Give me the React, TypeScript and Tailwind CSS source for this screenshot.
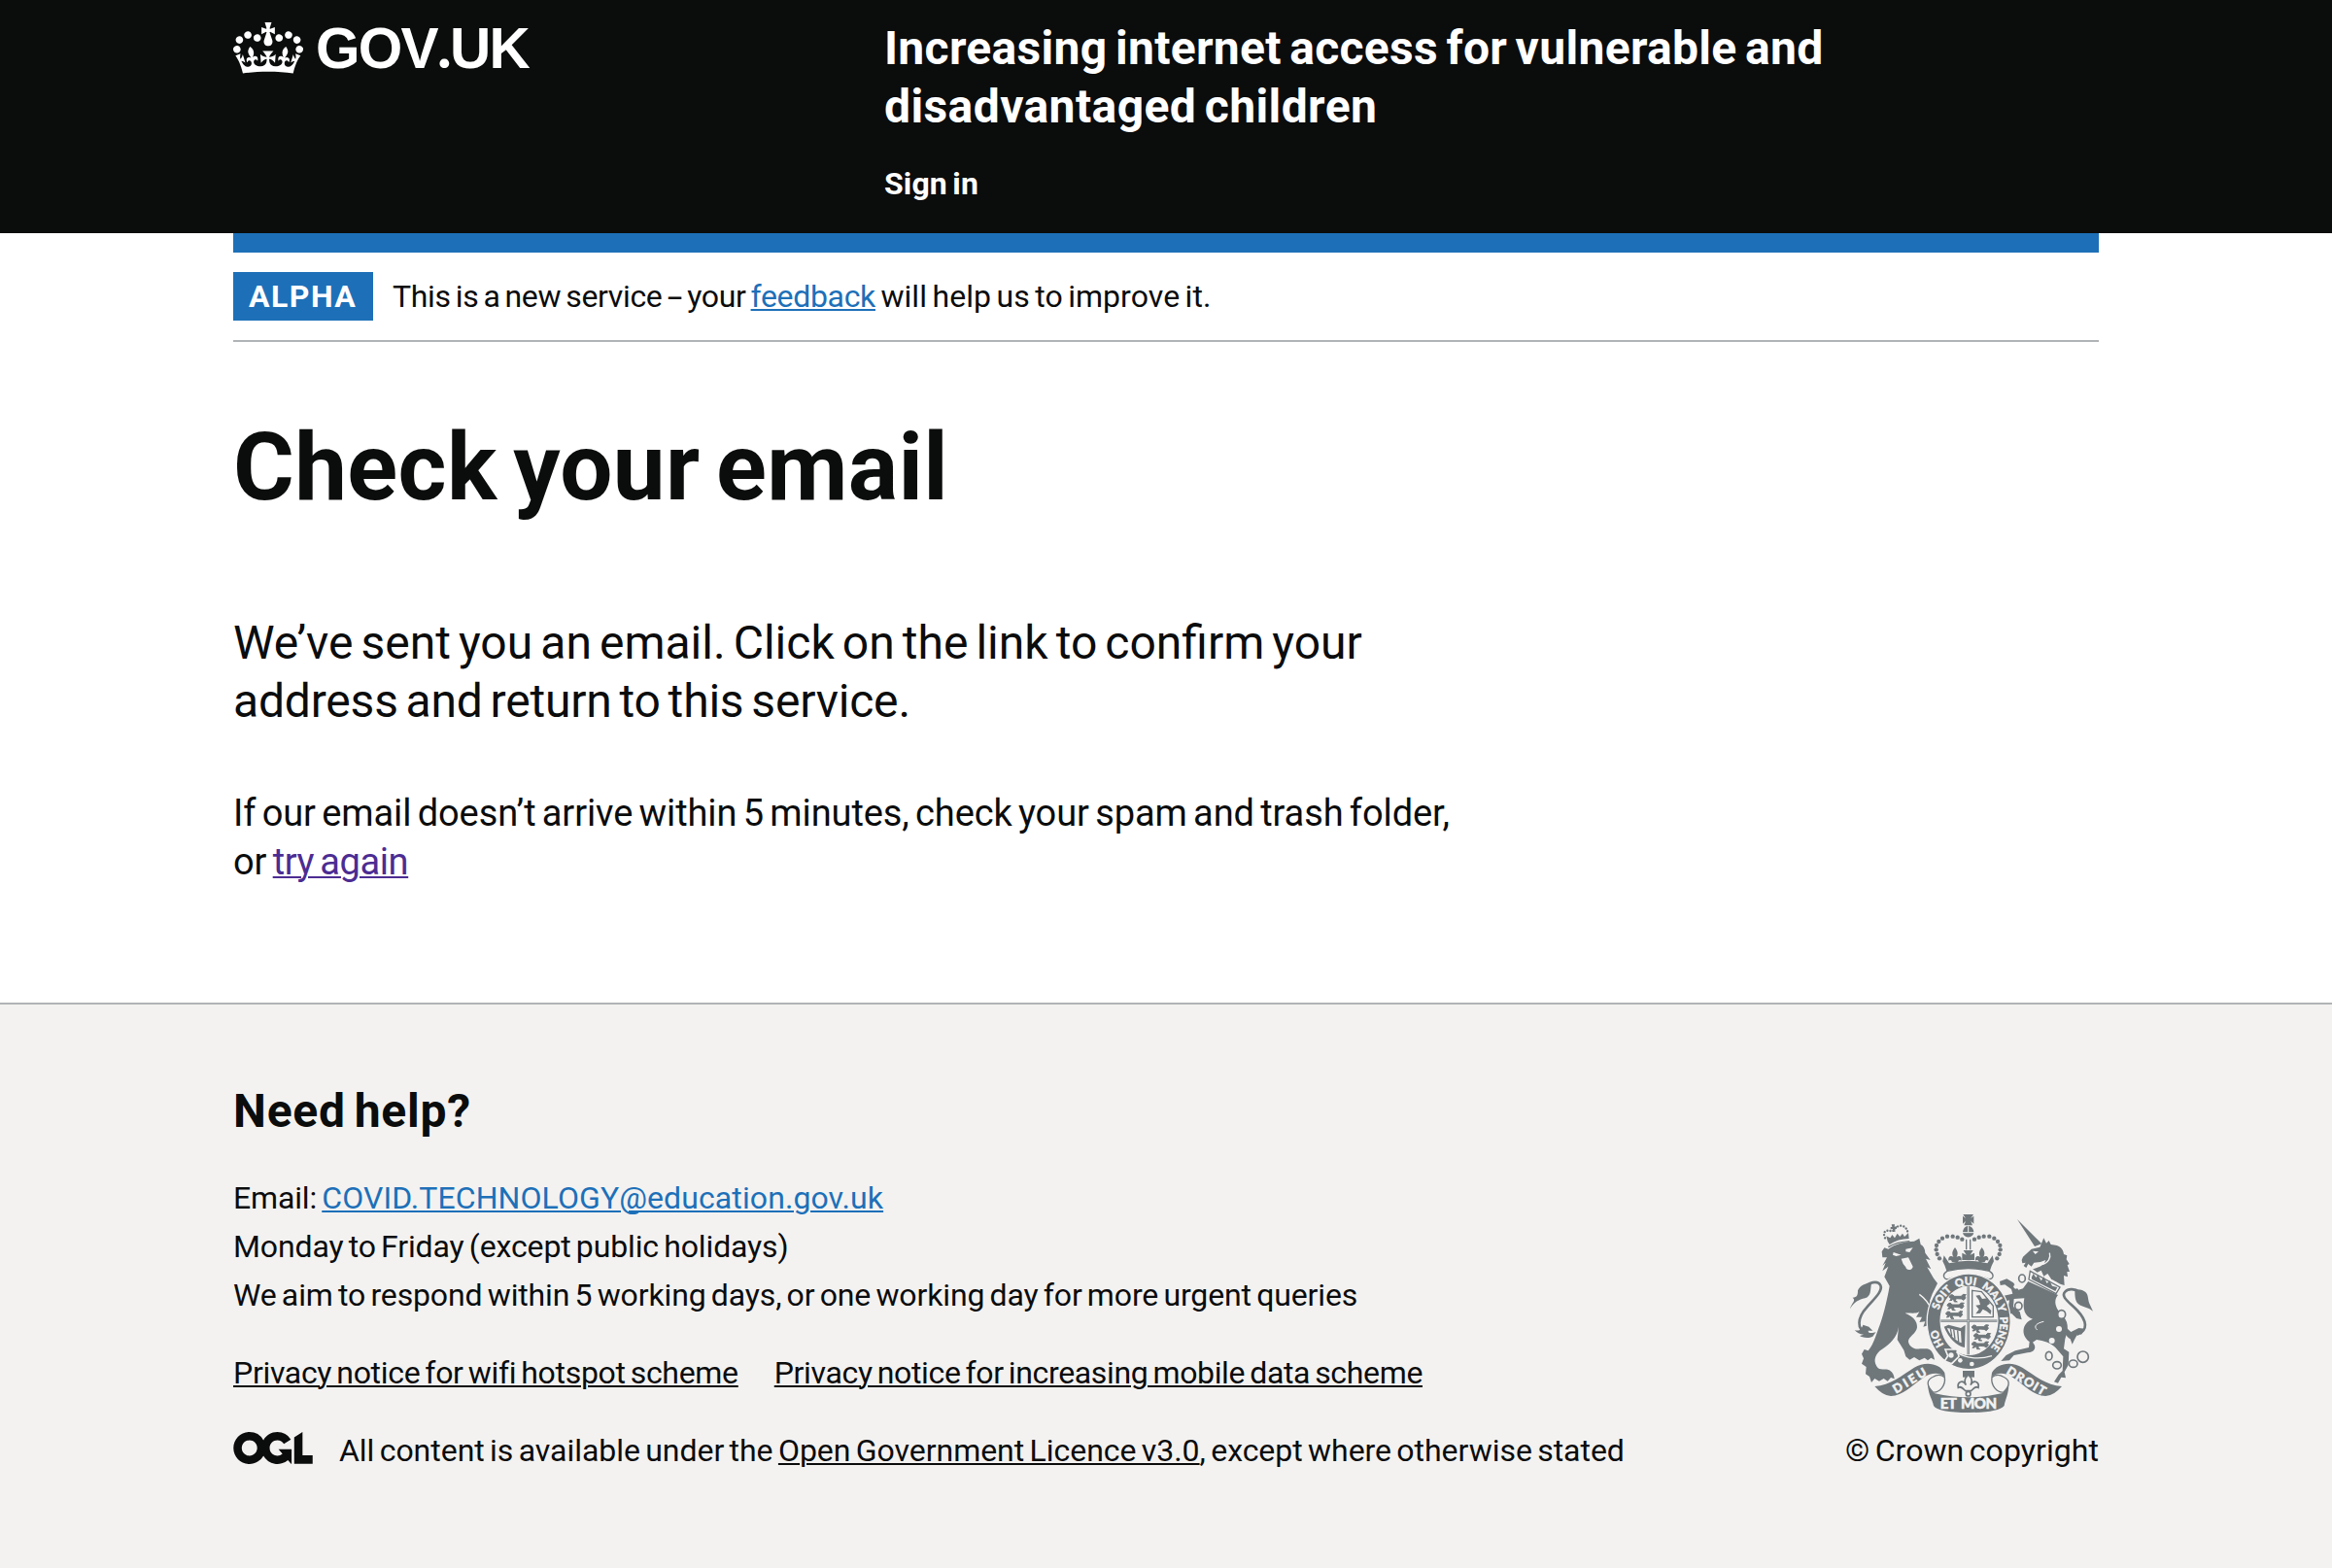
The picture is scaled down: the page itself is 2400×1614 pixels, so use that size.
const CROWN =
  'M25 30.2c3.5 1.5 7.7-.2 9.1-3.7 1.5-3.6-.2-7.8-3.9-9.2-3.6-1.4-7.6.3-9.1 3.9-1.4 3.5.3 7.5 3.9 9zM9 39.5c3.6 1.5 7.8-.2 9.2-3.7 1.5-3.6-.2-7.8-3.9-9.1-3.6-1.5-7.6.2-9.1 3.8-1.4 3.5.3 7.5 3.8 9zM4.4 57.2c3.5 1.5 7.7-.2 9.1-3.8 1.5-3.6-.2-7.7-3.9-9.1-3.5-1.5-7.6.3-9.1 3.8-1.4 3.5.3 7.6 3.9 9.1zm38.3-21.4c3.5 1.5 7.7-.2 9.1-3.8 1.5-3.6-.2-7.7-3.9-9.1-3.6-1.5-7.6.3-9.1 3.8-1.3 3.6.4 7.7 3.9 9.1zm64.4-5.6c-3.6 1.5-7.8-.2-9.1-3.7-1.5-3.6.2-7.8 3.8-9.2 3.6-1.4 7.7.3 9.2 3.9 1.3 3.5-.4 7.5-3.9 9zm15.9 9.3c-3.6 1.5-7.7-.2-9.1-3.7-1.5-3.6.2-7.8 3.7-9.1 3.6-1.5 7.7.2 9.2 3.8 1.5 3.5-.3 7.5-3.8 9zm4.7 17.7c-3.6 1.5-7.8-.2-9.2-3.8-1.5-3.6.2-7.7 3.9-9.1 3.6-1.5 7.7.3 9.2 3.8 1.3 3.5-.4 7.6-3.9 9.1zM89.3 35.8c-3.6 1.5-7.8-.2-9.2-3.8-1.4-3.6.2-7.7 3.9-9.1 3.6-1.5 7.7.3 9.2 3.8 1.4 3.6-.3 7.7-3.9 9.1zM69.7 17.7l8.9 4.7V9.3l-8.9 2.8c-.2-.3-.5-.6-.9-.9L72.4 0H59.6l3.5 11.2c-.3.3-.6.5-.9.9l-8.8-2.8v13.1l8.8-4.7c.3.3.6.7.9.9l-5 15.4v.1c-.2.8-.4 1.6-.4 2.4 0 4.1 3.1 7.5 7 8.1h.2c.3 0 .7.1 1 .1.4 0 .7 0 1-.1h.2c4-.6 7.1-4.1 7.1-8.1 0-.8-.1-1.7-.4-2.4V34l-5.1-15.4c.4-.2.7-.6 1-.9zM66 92.8c16.9 0 32.8 1.1 47.1 3.2 4-16.9 8.9-26.7 14-33.5l-9.6-3.4c1 4.9 1.1 7.2 0 10.2-1.5-1.4-3-4.3-4.2-8.7L108.6 76c2.8-2 5-3.2 7.5-3.3-4.4 9.4-10 11.9-13.6 11.2-4.3-.8-6.3-4.6-5.6-7.9 1-4.7 5.7-5.9 8-.5 4.3-8.7-3-11.4-7.6-8.8 7.1-7.2 7.9-13.5 2.1-21.1-8 6.1-8.1 12.3-4.5 20.8-4.7-5.4-12.1-2.5-9.5 6.2 3.4-5.2 7.9-2 7.2 3.1-.6 4.3-6.4 7.8-13.5 7.2-10.3-.9-10.9-8-11.2-13.8 2.5-.5 7.1 1.8 11 7.3L80.2 60c-4.1 4.4-8 5.3-12.3 5.4 1.4-4.4 8-11.6 8-11.6H55.5s6.4 7.2 7.9 11.6c-4.2-.1-8-1-12.3-5.4l1.4 16.4c3.9-5.5 8.5-7.7 10.9-7.3-.3 5.8-.9 12.8-11.1 13.8-7.2.6-12.9-2.9-13.5-7.2-.7-5 3.8-8.3 7.1-3.1 2.7-8.7-4.6-11.6-9.4-6.2 3.7-8.5 3.6-14.7-4.6-20.8-5.8 7.6-5 13.9 2.2 21.1-4.7-2.6-11.9.1-7.7 8.8 2.3-5.5 7.1-4.2 8.1.5.7 3.3-1.3 7.1-5.7 7.9-3.5.7-9-1.8-13.5-11.2 2.5.1 4.7 1.3 7.5 3.3l-4.7-15.4c-1.2 4.4-2.7 7.2-4.3 8.7-1.1-3-.9-5.3 0-10.2l-9.5 3.4c5 6.9 9.9 16.7 14 33.5 14.8-2.1 30.8-3.2 47.7-3.2z';

const OGL =
  'M421.5 142.8V.1l-50.7 32.3v161.1h112.4v-50.7zm-122.3-9.6A47.12 47.12 0 0 1 221 97.8c0-26 21.1-47.1 47.1-47.1 16.7 0 31.4 8.7 39.7 21.8l42.7-27.2A97.63 97.63 0 0 0 268.1 0c-36.5 0-68.3 20.1-85.1 49.7A98 98 0 0 0 97.8 0C43.9 0 0 43.9 0 97.8s43.9 97.8 97.8 97.8c36.5 0 68.3-20.1 85.1-49.7a97.76 97.76 0 0 0 149.6 25.4l19.4 22.2h3v-87.8h-80l24.3 27.5zM97.8 145c-26 0-47.1-21.1-47.1-47.1s21.1-47.1 47.1-47.1 47.1 21.1 47.1 47.1S123.8 145 97.8 145';

const INK = '#6f777b';
const BG = '#f3f2f1';

const LEFT_DOTS = [[388, 122], [374, 116], [359, 113], [342, 113], [327, 119], [316, 129], [309, 141], [308, 154], [311, 168], [318, 181]];

function SmallLion({ x, y }: { x: number; y: number }) {
  return (
    <path
      transform={`translate(${x} ${y})`}
      d="M0 6l6-5 6 1 3 4 22 0 6-6 9 1-4 4 3 6-6 7-7-4-16-1-3 6 6 4h-9l-3-9-4 4-7 1 5-6-6-3z"
      fill={INK}
      stroke={INK}
      strokeWidth="3"
    />
  );
}

function Fleur({ x, y, s }: { x: number; y: number; s: number }) {
  return (
    <path
      transform={`translate(${x} ${y}) scale(${s})`}
      d="M0-20C8-10 9-3 4 6c7-6 16-1 13 10-3-4-8-3-9 3H-8C-9 13-14 12-17 16-20 5-11 0-4 6-9-3-8-10 0-20z"
      fill={INK}
    />
  );
}

function Crest() {
  return (
    <svg className="block h-[204px] w-[250px]" viewBox="42 45 750 612" fill={INK}>
      <defs>
        <path id="garter" d="M336 453A97 114 0 1 1 480 453" />
      </defs>

      {/* Lion's tail */}
      <path d="M94 408C60 404 66 362 92 334C116 306 144 282 136 264C128 248 98 254 84 274" fill="none" stroke={INK} strokeWidth="8" />
      <path d="M42 337C46 318 62 312 50 302C64 302 66 294 66 280C74 262 92 256 108 258C104 280 108 298 88 304C70 308 54 316 42 337z" />
      <path d="M56 402C70 408 78 398 82 386L100 392L112 404L98 404C98 414 112 412 122 408L112 422C98 430 76 424 72 420L84 416C72 416 62 410 56 402z" />

      {/* Lion */}
      <path d="M140 160L148 148L160 152C180 136 214 128 240 128L256 119L260 138C268 142 274 152 274 164L290 186L276 182L292 214L280 208L300 242L312 258L296 290L288 312L300 330L320 384L308 400L298 390L290 402L282 388L268 392L274 376L256 378L264 362L246 362L256 346C240 354 226 348 212 350C236 360 250 374 249 394C247 414 222 422 222 438C224 452 240 464 258 460L280 460C294 462 300 476 303 494L292 488L282 496L272 488L256 496L240 486L226 494L214 484L208 464L188 432L192 392C188 424 164 446 140 462C122 474 112 494 124 514C132 528 144 522 158 524C172 528 178 540 179 553L168 549L158 560L146 552L132 560L118 552L108 564L102 546L90 538L92 516L78 506L84 490L78 476L86 462L98 466C116 444 124 412 134 386C148 346 158 300 164 266L148 238L160 206L142 220L152 194L142 204L156 178L142 178z" />
      <path d="M176 162L200 170L184 174L174 170zM214 152L236 148L226 162L214 160z" fill={BG} />
      <path d="M200 182L222 178L236 206C236 216 216 222 214 208L206 198z" fill={BG} />
      <path d="M256 292C276 306 288 324 296 344" fill="none" stroke={BG} strokeWidth="4" />
      <path d="M158 128L154 112L166 118L172 108L180 118L188 104L196 114L204 104L210 114L222 102L224 120Q190 120 164 138z" />
      <path d="M160 146Q186 130 226 128" fill="none" stroke={INK} strokeWidth="4" />
      <path d="M150 118C142 100 150 90 174 98C184 76 214 72 220 100" fill="none" stroke={INK} strokeWidth="7" strokeLinecap="round" strokeDasharray="0.1 9.5" />
      <path d="M170 76h10l-1 7 7-1v8l-6-1 2 9h-9l1-8-7 1v-7l5 0z" />

      {/* Unicorn's tail */}
      <path d="M742 416C780 404 772 372 744 342C722 318 690 300 706 284C716 272 738 276 750 284" fill="none" stroke={INK} strokeWidth="8" />
      <path d="M736 276C754 280 752 274 768 284C778 292 776 304 780 318L792 344C772 326 744 334 738 306C736 296 736 288 736 276z" />
      <path d="M700 386L724 408L748 396L768 398L756 416L746 412L736 430L728 446L722 430C708 420 700 408 700 386z" />

      {/* Unicorn */}
      <path d="M558 60L634 136L612 144z" />
      <path d="M572 186L576 176L602 152L628 146L640 118L648 134L656 126L662 138C692 140 700 152 702 168L712 172L710 184L719 198L713 202L720 222L712 222L714 238L702 234L704 264C690 262 676 250 664 246L652 228L640 236L632 218L620 224L606 214C622 208 640 206 646 186L630 192L610 194L602 206L592 198L586 210L578 204L584 194L574 196z" />
      <path d="M606 158L624 160L614 168z" fill={BG} />
      <path d="M632 200C656 196 662 178 658 164" fill="none" stroke={BG} strokeWidth="4" />
      <path d="M598 220L690 270L678 290L594 246z" fill={BG} stroke={INK} strokeWidth="4" />
      <path d="M602 240L608 228L616 240L622 232L632 250L640 238L650 258L658 250L666 266L682 270L676 282L604 246z" />
      <path d="M592 252L684 294C664 318 686 346 700 360C722 384 712 410 706 430L702 460L718 470L716 510L704 532L708 550L694 548L684 566L672 562L686 540L698 528L700 484L676 456C660 440 640 436 618 432L606 440C620 456 612 470 590 472L548 480L534 496L508 498L524 480L552 466L594 456L596 438C570 420 570 382 606 368C580 362 574 334 580 304L548 306L546 330L566 346L572 370L556 366L540 350L532 360L530 336L534 310L508 318L510 298L544 290L540 276L520 262L506 264L504 252L526 244L546 256L562 278L576 274z" />
      <path d="M640 376C620 380 606 390 620 402" fill="none" stroke={BG} strokeWidth="3" />
      <g fill={BG} stroke={INK} strokeWidth="5">
        <ellipse cx="573" cy="243" rx="10" ry="12" />
        <ellipse cx="562" cy="328" rx="11" ry="12" />
        <ellipse cx="695" cy="354" rx="12" ry="13" />
        <ellipse cx="656" cy="482" rx="10" ry="13" />
        <ellipse cx="681" cy="511" rx="13" ry="11" />
        <ellipse cx="731" cy="506" rx="13" ry="11" />
        <circle cx="761" cy="485" r="17" />
      </g>
      <g fill={BG}>
        <circle cx="554" cy="268" r="7" />
        <circle cx="687" cy="399" r="9" />
        <circle cx="665" cy="435" r="9" />
      </g>

      {/* Royal crown */}
      <path d="M391 45H423L415 57L424 50V74L415 66L420 79H394L399 66L390 74V50L399 57z" />
      <path d="M390 102C390 74 424 74 424 102C420 120 394 120 390 102z" />
      <path d="M388 101H426M407 80V100" stroke={BG} strokeWidth="3" />
      <g>
        {LEFT_DOTS.map(([x, y]) => (
          <circle key={`l${x}`} cx={x} cy={y} r="6.5" />
        ))}
        {LEFT_DOTS.map(([x, y]) => (
          <circle key={`r${x}`} cx={814 - x} cy={y} r="6.5" />
        ))}
      </g>
      <path d="M399 122H403V154H399zM411 122H415V154H411z" />
      <path d="M316 166L328 190L332 172L348 196Q407 180 466 196L482 172L486 190L498 166C492 182 480 196 474 220Q407 206 340 220C334 196 322 182 316 166z" />
      <Fleur x={366} y={170} s={1.15} />
      <Fleur x={449} y={170} s={1.15} />
      <path d="M392 156H422L413 170L426 164V186H388V164L401 170z" />
      <path d="M342 220C322 232 334 254 354 242Q407 222 462 242C482 252 492 232 472 220Q407 204 342 220z" fill={BG} stroke={INK} strokeWidth="4" />

      {/* Garter */}
      <path fillRule="evenodd" d="M409 228A129 148 0 1 1 408 228zM409 268A88 105 0 1 0 410 268z" stroke={BG} strokeWidth="4" />
      <g fontFamily="Lato, sans-serif" fontWeight="900" fontSize="33" fill={BG} stroke={BG} strokeWidth="1.2">
        <text><textPath href="#garter" startOffset="6">HO</textPath></text>
        <text><textPath href="#garter" startOffset="118">SOIT</textPath></text>
        <text><textPath href="#garter" startOffset="208">QUI</textPath></text>
        <text><textPath href="#garter" startOffset="288">MAL Y</textPath></text>
        <text><textPath href="#garter" startOffset="398">PENSE</textPath></text>
      </g>

      {/* Shield */}
      <path d="M407 268V478M322 374H496" stroke={INK} strokeWidth="7" />
      <path d="M407 268V478M322 374H496" stroke={BG} strokeWidth="1.5" />
      <SmallLion x={348} y={292} />
      <SmallLion x={342} y={318} />
      <SmallLion x={338} y={344} />
      <SmallLion x={418} y={386} />
      <SmallLion x={424} y={412} />
      <SmallLion x={418} y={438} />
      <path d="M419 280L448 284L484 328V362H419z" fill="none" stroke={INK} strokeWidth="4" />
      <path d="M430 296L442 294L450 306L466 304L474 320L464 328L478 342L476 354L464 344L452 338L444 350L430 352L440 338L430 326L444 324L440 310z" />
      <path d="M332 392L346 386L384 396L398 386L396 456C372 452 346 426 332 392z" />
      <path d="M342 396L384 406L386 442C366 434 350 418 342 396z" fill={BG} />
      <path d="M352 398L356 420M362 400L366 430M374 403L377 438" stroke={INK} strokeWidth="4" />

      {/* Buckle */}
      <path d="M336 462L372 462L378 484L356 506L334 498L344 482z" stroke={BG} strokeWidth="5" />
      <circle cx="354" cy="480" r="8" fill={BG} />
      <circle cx="382" cy="496" r="7" fill={BG} />
      <circle cx="418" cy="507" r="7" fill={BG} />
      <path d="M370 470C398 490 440 494 480 482" fill="none" stroke={BG} strokeWidth="4" />
      <path d="M390 528H426V548H390z" />
      <g fill={BG} stroke={INK} strokeWidth="5">
        <path d="M407 540C420 552 420 562 414 572C424 554 442 562 438 580C430 574 424 582 416 590H398C390 582 384 574 376 580C372 562 390 554 400 572C394 562 394 552 407 540z" />
        <circle cx="407" cy="599" r="7" />
      </g>

      {/* Motto scroll */}
      <path d="M118 576C166 574 204 540 240 518C276 496 320 506 334 534L336 548C318 530 290 534 270 548C232 574 206 604 168 606C148 604 134 594 118 576z" />
      <path d="M696 576C648 574 610 540 574 518C538 496 494 506 480 534L478 548C496 530 524 534 544 548C582 574 608 604 646 606C666 604 680 594 696 576z" />
      <path d="M300 546C276 556 278 574 298 594C318 596 338 574 334 548C322 538 308 540 300 546z" fill={BG} stroke={INK} strokeWidth="4" />
      <path d="M514 546C538 556 536 574 516 594C496 596 476 574 480 548C492 538 506 540 514 546z" fill={BG} stroke={INK} strokeWidth="4" />
      <path d="M282 570C288 586 296 594 304 598Q407 622 510 598C518 594 526 586 532 570C532 600 520 620 518 636Q500 657 407 657Q314 657 300 636C296 616 284 604 282 570z" />
      <g fontFamily="Lato, sans-serif" fontWeight="900" fill={BG} stroke={BG} strokeWidth="1.5">
        <text x="320" y="645" fontSize="45" wordSpacing="6" textLength="175">ET MON</text>
        <text transform="translate(184 599) rotate(-31)" fontSize="38" textLength="114">DIEU</text>
        <text transform="translate(522 536) rotate(31)" fontSize="38" textLength="134">DROIT</text>
      </g>
    </svg>
  );
}

export default function App() {
  return (
    <div className="flex h-[1614px] w-[2400px] flex-col overflow-hidden bg-white font-[Roboto,Arial,sans-serif] text-[32px] leading-[50px] text-[#0b0c0c] [word-spacing:-0.08em]">
      <header className="h-[240px] shrink-0 bg-[#0b0c0c] px-[240px] pt-5 text-white">
        <div className="flex">
          <a href="#" className="flex h-[60px] w-[670px] gap-[13px] pt-[3px] font-['Liberation_Sans',Arial,sans-serif] text-[58.5px] font-bold leading-[54px] tracking-[-1.8px]">
            <svg className="h-[53px] w-[72px]" viewBox="0 0 132 97" fill="currentColor"><path d={CROWN} /></svg>
            <span className="whitespace-nowrap">GOV<span className="font-[Lato,sans-serif] text-[64px] leading-[0]">.</span>UK</span>
          </a>
          <div className="font-bold">
            <a href="#" className="block text-5xl leading-[60px] [word-spacing:-0.08em]">
              <span className="block tracking-[0.0065em]">Increasing internet access for vulnerable and</span>
              <span className="block tracking-[0.0085em]">disadvantaged children</span>
            </a>
            <a href="#" className="mt-[29px] block leading-10 tracking-[0.0036em]">Sign in</a>
          </div>
        </div>
      </header>

      <div className="mx-[240px] h-5 shrink-0 bg-[#1d70b8]" />

      <div className="mx-[240px] mt-5 flex h-[72px] shrink-0 border-b-2 border-[#b1b4b6]">
        <strong className="h-[50px] w-36 bg-[#1d70b8] pl-4 font-bold tracking-[1.5px] text-white">ALPHA</strong>
        <p className="ml-5 whitespace-pre leading-[50px] tracking-[-0.0105em]">This is a new service <span className="font-['Noto_Sans'] leading-[0]">–</span> your <a href="#" className="text-[#1d70b8] underline decoration-2 underline-offset-2">feedback</a><span className="tracking-[0.0018em]"> will help us to improve it.</span></p>
      </div>

      <main className="mx-[240px] h-[680px] shrink-0 pt-[79px]">
        <h1 className="text-8xl font-bold leading-[100px] tracking-[0.004em] [word-spacing:-0.08em]">Check your email</h1>
        <p className="mt-[101px] text-5xl leading-[60px] [word-spacing:-0.08em]">We’ve sent you an email. Click on the link to confirm your<br /><span className="tracking-[-0.004em]">address and return to this service.</span></p>
        <p className="mt-[60px] text-[38px] tracking-[-0.0023em] [word-spacing:-0.08em]">If our email doesn’t arrive within 5 minutes, check your spam and trash folder,<br />or <a href="#" className="tracking-[-0.01em] text-[#4c2c92] underline decoration-2 underline-offset-2">try again</a></p>
      </main>

      <footer className="flex grow items-start justify-between border-t-2 border-[#b1b4b6] bg-[#f3f2f1] px-[240px] pt-20">
        <div>
          <h2 className="text-5xl font-bold leading-[60px] tracking-[0.016em] [word-spacing:-0.08em]">Need help?</h2>
          <p className="mt-[34px] tracking-[-0.005em]">Email: <a href="#" className="tracking-[0.003em] text-[#1d70b8] underline decoration-2 underline-offset-2">COVID.TECHNOLOGY@education.gov.uk</a></p>
          <p className="tracking-[-0.004em]">Monday to Friday (except public holidays)</p>
          <p className="tracking-[-0.004em]">We aim to respond within 5 working days, or one working day for more urgent queries</p>
          <nav className="mt-[30px] flex gap-[37px]">
            <a href="#" className="tracking-[-0.0097em] underline decoration-2 underline-offset-2">Privacy notice for wifi hotspot scheme</a>
            <a href="#" className="tracking-[-0.0108em] underline decoration-2 underline-offset-2">Privacy notice for increasing mobile data scheme</a>
          </nav>
          <div className="mt-[30px] flex">
            <svg className="mr-[27px] mt-1.5 h-[33px] w-[82px]" viewBox="0 0 483.2 195.7" fill="currentColor"><path d={OGL} /></svg>
            <p className="whitespace-nowrap tracking-[-0.001em]">All content is available under the <a href="#" className="underline decoration-2 underline-offset-2">Open Government Licence v3.0</a>, except where otherwise stated</p>
          </div>
        </div>
        <div className="mt-[136px] flex flex-col items-end">
          <div className="pr-1.5"><Crest /></div>
          <p className="mt-3.5 tracking-[0.002em]">© Crown copyright</p>
        </div>
      </footer>
    </div>
  );
}
